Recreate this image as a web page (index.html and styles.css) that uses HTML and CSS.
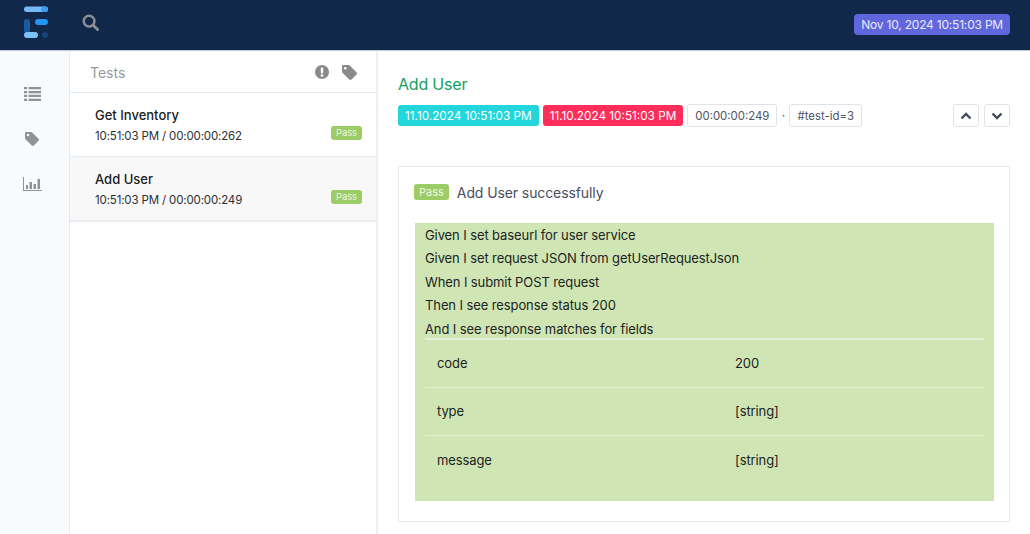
FILE: index.html
```html
<!DOCTYPE html>
<html>

<head>
    <title>Test Report</title>
    <meta charset="UTF-8">
    <link rel="stylesheet" href="styles.css">
</head>

<body>
    <header class="topbar">
        <div class="topbar-left">
            <svg class="logo" viewBox="0 0 26 34" width="26" height="34">
                <rect x="0" y="0.500" width="24" height="5.500" rx="2.700" fill="#74baf6" />
                <rect x="17" y="0.500" width="7" height="5.500" rx="2.700" fill="#3e9bec" />
                <rect x="0" y="13" width="6" height="14" rx="3" fill="#1c5a9e" />
                <rect x="11" y="13" width="13" height="6" rx="3" fill="#2196f3" />
                <rect x="0" y="26" width="14" height="6" rx="3" fill="#7cc0f7" />
                <circle cx="21" cy="29" r="3" fill="#15457f" />
            </svg>
            <svg class="search-icon" viewBox="0 0 18 18" width="17" height="17">
                <circle cx="7.500" cy="7.500" r="5.700" fill="none" stroke="#8a8f95" stroke-width="2.600" />
                <path d="M11.800 11.800 L16.500 16.500" stroke="#8a8f95" stroke-width="3" stroke-linecap="round" />
            </svg>
        </div>
        <span class="date-badge">Nov 10, 2024 10:51:03 PM</span>
    </header>

    <div class="main">
        <nav class="sidenav">
            <svg viewBox="0 0 17 14" width="17" height="14">
                <path fill="#8f9297" d="M0 0h3v2.300H0zM4.500 0H17v2.300H4.500zM0 3.900h3v2.300H0zM4.500 3.900H17v2.300H4.500zM0 7.800h3v2.300H0zM4.500 7.800H17v2.300H4.500zM0 11.700h3V14H0zM4.500 11.700H17V14H4.500z" />
            </svg>
            <svg viewBox="0 0 15 15" width="14" height="14">
                <path fill="#8f9297" d="M1.200 0H6.500c.5 0 .9.200 1.200.5l6.800 6.800c.6.600.6 1.600 0 2.200l-5 5c-.6.600-1.600.6-2.200 0L.5 7.700C.2 7.400 0 7 0 6.500V1.200C0 .5.500 0 1.200 0zM3.300 2a1.300 1.300 0 1 0 0 2.600 1.300 1.300 0 0 0 0-2.600z" />
            </svg>
            <svg viewBox="0 0 19 14" width="19" height="14">
                <path fill="#8f9297" d="M0 0h1v13h18v1H0z" />
                <path fill="#8f9297" d="M3 8h2v4H3zM6.500 5h2.500v7H6.500zM10.500 7h2.500v5h-2.500zM14.500 2h2.500v10h-2.500z" />
            </svg>
        </nav>

        <section class="test-list">
            <div class="list-head">
                <span class="list-title">Tests</span>
                <div class="list-tools">
                    <svg viewBox="0 0 14 14" width="14" height="14">
                        <circle cx="7" cy="7" r="7" fill="#8a8a8a" />
                        <rect x="5.800" y="2.600" width="2.400" height="5.800" rx="0.800" fill="#fff" />
                        <circle cx="7" cy="10.500" r="1.300" fill="#fff" />
                    </svg>
                    <svg viewBox="0 0 15 15" width="15" height="15">
                        <path fill="#8a8a8a" d="M1.200 0H6.500c.5 0 .9.200 1.200.5l6.800 6.800c.6.600.6 1.600 0 2.200l-5 5c-.6.600-1.600.6-2.200 0L.5 7.700C.2 7.400 0 7 0 6.500V1.200C0 .5.500 0 1.200 0zM3.300 2a1.300 1.300 0 1 0 0 2.600 1.300 1.300 0 0 0 0-2.600z" />
                    </svg>
                </div>
            </div>
            <div class="test-item">
                <div class="test-name">Get Inventory</div>
                <div class="test-row">
                    <span class="test-time">10:51:03 PM / 00:00:00:262</span>
                    <span class="pass-small">Pass</span>
                </div>
            </div>
            <div class="test-item active">
                <div class="test-name">Add User</div>
                <div class="test-row">
                    <span class="test-time">10:51:03 PM / 00:00:00:249</span>
                    <span class="pass-small">Pass</span>
                </div>
            </div>
        </section>

        <section class="detail">
            <h1 class="detail-title">Add User</h1>
            <div class="detail-meta">
                <span class="chip chip-start">11.10.2024 10:51:03 PM</span>
                <span class="chip chip-end">11.10.2024 10:51:03 PM</span>
                <span class="chip chip-plain">00:00:00:249</span>
                <span class="dot">·</span>
                <span class="chip chip-plain">#test-id=3</span>
                <div class="pager">
                    <span class="pager-btn">
                        <svg viewBox="0 0 12 8" width="12" height="8">
                            <path d="M1.500 6.500 L6 2 L10.500 6.500" fill="none" stroke="#454a5c" stroke-width="2.400" />
                        </svg>
                    </span>
                    <span class="pager-btn">
                        <svg viewBox="0 0 12 8" width="12" height="8">
                            <path d="M1.500 1.500 L6 6 L10.500 1.500" fill="none" stroke="#454a5c" stroke-width="2.400" />
                        </svg>
                    </span>
                </div>
            </div>

            <div class="card">
                <div class="card-head">
                    <span class="pass-large">Pass</span>
                    <span class="card-title">Add User successfully</span>
                </div>
                <div class="steps">
                    <div class="step">Given I set baseurl for user service</div>
                    <div class="step">Given I set request JSON from getUserRequestJson</div>
                    <div class="step">When I submit POST request</div>
                    <div class="step">Then I see response status 200</div>
                    <div class="step">And I see response matches for fields</div>
                    <table class="fields">
                        <tr>
                            <td class="field-name">code</td>
                            <td>200</td>
                        </tr>
                        <tr>
                            <td class="field-name">type</td>
                            <td>[string]</td>
                        </tr>
                        <tr>
                            <td class="field-name">message</td>
                            <td>[string]</td>
                        </tr>
                    </table>
                </div>
            </div>
        </section>
    </div>
</body>

</html>
```

FILE: styles.css
```css
html, body {
    margin: 0px;
    padding: 0px;
    height: 100%;
    overflow: hidden;
}

body {
    font-family: Inter, "Liberation Sans", sans-serif;
    color: #1f2126;
    background-color: #fff;
    display: flex;
    flex-direction: column;
}

.topbar {
    box-sizing: border-box;
    height: 51px;
    flex: none;
    background-color: #12284a;
    border-bottom: 1px solid #c3ccd6;
    display: flex;
    align-items: center;
    justify-content: space-between;
    padding: 0px 20px 0px 24px;
}

.topbar-left {
    display: flex;
    align-items: center;
}

.logo {
    margin-top: -4px;
}

.search-icon {
    margin-left: 32px;
    margin-top: -5px;
}

.date-badge {
    background-color: #6066dc;
    color: #e9eafa;
    font-size: 12px;
    line-height: 21px;
    padding: 0px 7px;
    border-radius: 4px;
    letter-spacing: -0.2px;
    margin-top: -1px;
}

.main {
    flex: 1;
    display: flex;
    min-height: 0;
}

.sidenav {
    box-sizing: border-box;
    width: 70px;
    flex: none;
    background-color: #f8fbfe;
    border-right: 1px solid #e8e9eb;
    display: flex;
    flex-direction: column;
    align-items: center;
    gap: 31px;
    padding: 36px 5px 0px 0px;
}

.test-list {
    box-sizing: border-box;
    width: 308px;
    flex: none;
    border-right: 2px solid #eeeff1;
}

.list-head {
    box-sizing: border-box;
    height: 42px;
    border-bottom: 1px solid #e9eaec;
    display: flex;
    align-items: center;
    justify-content: space-between;
    padding: 2px 19px 0px 20px;
}

.list-title {
    font-size: 14px;
    color: #97999c;
}

.list-tools {
    display: flex;
    gap: 13px;
}

.test-item {
    box-sizing: border-box;
    height: 64px;
    padding: 14px 14px 0px 25px;
    border-bottom: 1px solid #e9eaec;
}

.test-item.active {
    height: 65px;
    background-color: #f8f8f8;
    border-bottom: 2px solid #ececee;
}

.test-name {
    font-size: 13px;
    font-weight: 500;
    line-height: 16px;
    color: #1b1d22;
}

.test-row {
    display: flex;
    justify-content: space-between;
    align-items: flex-start;
    margin-top: 5px;
}

.test-time {
    font-size: 11.500px;
    line-height: 16px;
    letter-spacing: -0.15px;
    color: #2d2f35;
}

.pass-small {
    background-color: #9ccc65;
    color: #eef6e3;
    font-size: 9.300px;
    line-height: 14px;
    padding: 0px 5px;
    border-radius: 3px;
    margin-top: -2px;
}

.detail {
    flex: 1;
    min-width: 0;
    padding: 0px 20px 0px 20px;
}

.detail-title {
    margin: 22px 0px 0px 0px;
    font-size: 16px;
    line-height: 22px;
    font-weight: 400;
    letter-spacing: -0.2px;
    color: #16a05d;
}

.detail-meta {
    display: flex;
    align-items: center;
    margin-top: 9px;
}

.chip {
    box-sizing: border-box;
    font-size: 11.760px;
    line-height: 22px;
    height: 21px;
    padding: 0px 7px;
    border-radius: 3px;
    color: #fff;
    margin-right: 4px;
}

.chip-start {
    background-color: #22d6dc;
}

.chip-end {
    background-color: #ff2d5a;
}

.chip-plain {
    font-size: 11.400px;
    height: 23px;
    background-color: #fff;
    border: 1px solid #e2e3e6;
    color: #50535f;
    margin-right: 0px;
}

.dot {
    width: 12px;
    text-align: center;
    font-size: 12px;
    color: #50535f;
}

.pager {
    margin-left: auto;
    display: flex;
    gap: 5px;
}

.pager-btn {
    box-sizing: border-box;
    width: 26px;
    height: 23px;
    border: 1px solid #e2e3e6;
    border-radius: 3px;
    display: flex;
    align-items: center;
    justify-content: center;
}

.card {
    box-sizing: border-box;
    height: 356px;
    margin-top: 39px;
    border: 1px solid #e9e9eb;
    padding: 15px 15px 0px 15px;
}

.card-head {
    display: flex;
    align-items: center;
    gap: 8px;
    height: 20px;
}

.pass-large {
    background-color: #9ccc65;
    color: #eef6e3;
    font-size: 11px;
    line-height: 16px;
    padding: 0px 5px;
    border-radius: 3px;
}

.card-title {
    font-size: 14px;
    letter-spacing: -0.1px;
    color: #4a4d5e;
}

.steps {
    box-sizing: border-box;
    height: 278px;
    margin: 21px 0px 0px 1px;
    background-color: #cfe6b4;
    padding: 0px 10px;
    font-size: 13px;
    letter-spacing: -0.1px;
    color: #20231f;
}

.step {
    height: 23.400px;
    line-height: 24px;
}

.fields {
    width: 100%;
    border-collapse: collapse;
    margin-top: -2px;
}

.fields td {
    box-sizing: border-box;
    height: 48.300px;
    padding: 0px;
    border-top: 1px solid #e3efd6;
}

.fields tr:first-child td {
    border-top: 2px solid #e3efd6;
}

.fields .field-name {
    width: 310px;
    padding-left: 12px;
}
```
